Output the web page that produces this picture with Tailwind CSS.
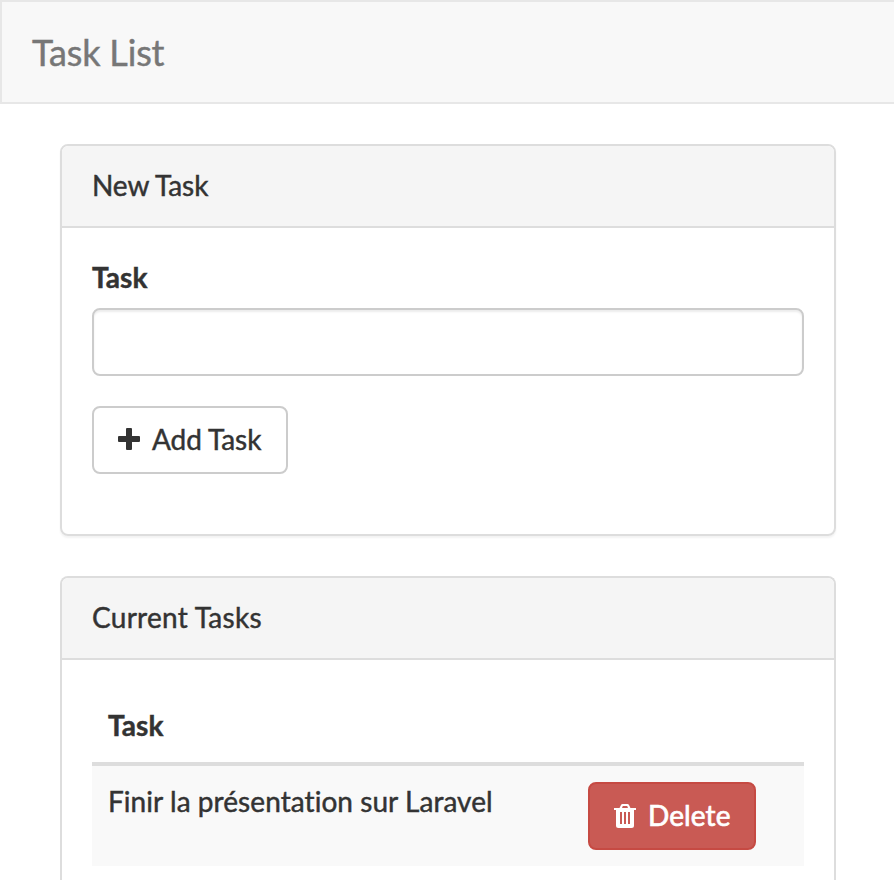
<!DOCTYPE html>
<html lang="en">
<head>
<meta charset="utf-8">
<title>Task List</title>
<script src="https://cdn.jsdelivr.net/npm/@tailwindcss/browser@4"></script>
</head>
<body class="h-[880px] overflow-hidden bg-white font-['Lato',sans-serif] text-[28px] leading-[40px] text-[#333] [font-variant-ligatures:no-common-ligatures] [-webkit-text-stroke:0.45px]">
<nav class="h-[104px] border-2 border-r-0 border-[#e7e7e7] bg-[#f8f8f8] pl-[30px] pt-[30px] text-[36px] tracking-[-0.16px] text-[#777]">Task List</nav>
<main class="ml-[60px] mt-10 h-[736px] w-[776px]">
  <section class="h-[392px] rounded-lg border-2 border-[#ddd] shadow-[0_2px_2px_rgba(0,0,0,0.05)]">
    <h2 class="h-[82px] rounded-t-md border-b-2 border-[#ddd] bg-[#f5f5f5] px-[30px] pt-[19px] tracking-[-0.08px]">New Task</h2>
    <form class="px-[30px] pt-[29px]">
      <label for="task" class="block font-bold tracking-[0.1px]">Task</label>
      <input id="task" class="mt-[11px] block h-[68px] w-full rounded-lg border-2 border-[#ccc] bg-white px-6 shadow-[inset_0_2px_2px_rgba(0,0,0,0.075)]">
      <button type="button" class="mt-[30px] flex h-[68px] w-[196px] items-center rounded-lg border-2 border-[#ccc] bg-white pb-0.5 pl-6">
        <svg class="mr-3 h-[22px] w-[22px]" viewBox="0 0 22 22" fill="#333"><path d="M9 0h4q1 0 1 1v7h7q1 0 1 1v4q0 1-1 1h-7v7q0 1-1 1H9q-1 0-1-1v-7H1q-1 0-1-1V9q0-1 1-1h7V1q0-1 1-1z"/></svg>
        <span class="tracking-[-0.08px]">Add Task</span>
      </button>
    </form>
  </section>
  <section class="mt-10 h-[304px] rounded-t-lg border-2 border-b-0 border-[#ddd]">
    <h2 class="h-[82px] rounded-t-md border-b-2 border-[#ddd] bg-[#f5f5f5] px-[30px] pt-[19px] tracking-[0.28px]">Current Tasks</h2>
    <div class="px-[30px] pt-[30px]">
      <div class="h-[76px] border-b-4 border-[#ddd] px-4 pt-[15px] font-bold tracking-[0.1px]">Task</div>
      <div class="flex h-[100px] justify-between bg-[#f9f9f9] pl-4 pr-12 pt-4">
        <span class="-mt-px tracking-[0.06px]">Finir la présentation sur Laravel</span>
        <button type="button" class="flex h-[68px] w-[168px] items-center rounded-lg border-2 border-[#c64a43] bg-[#c95a54] pb-0.5 pl-6 text-white [-webkit-text-stroke:0.7px]">
          <svg class="relative top-px mr-3 h-6 w-[22px]" viewBox="0 0 22 24" fill="white"><path fill-rule="evenodd" d="M0 4h5.500L7 1q.5-1 1.500-1h5q1 0 1.500 1l1.500 3H22v2h-2v15.500Q20 24 17.500 24h-13Q2 24 2 21.500V6H0zM8 4h6l-.8-2H8.800zM6 8v12h2V8zM10 8v12h2V8zM14 8v12h2V8z"/></svg>
          <span class="tracking-[0.1px]">Delete</span>
        </button>
      </div>
    </div>
  </section>
</main>
</body>
</html>
